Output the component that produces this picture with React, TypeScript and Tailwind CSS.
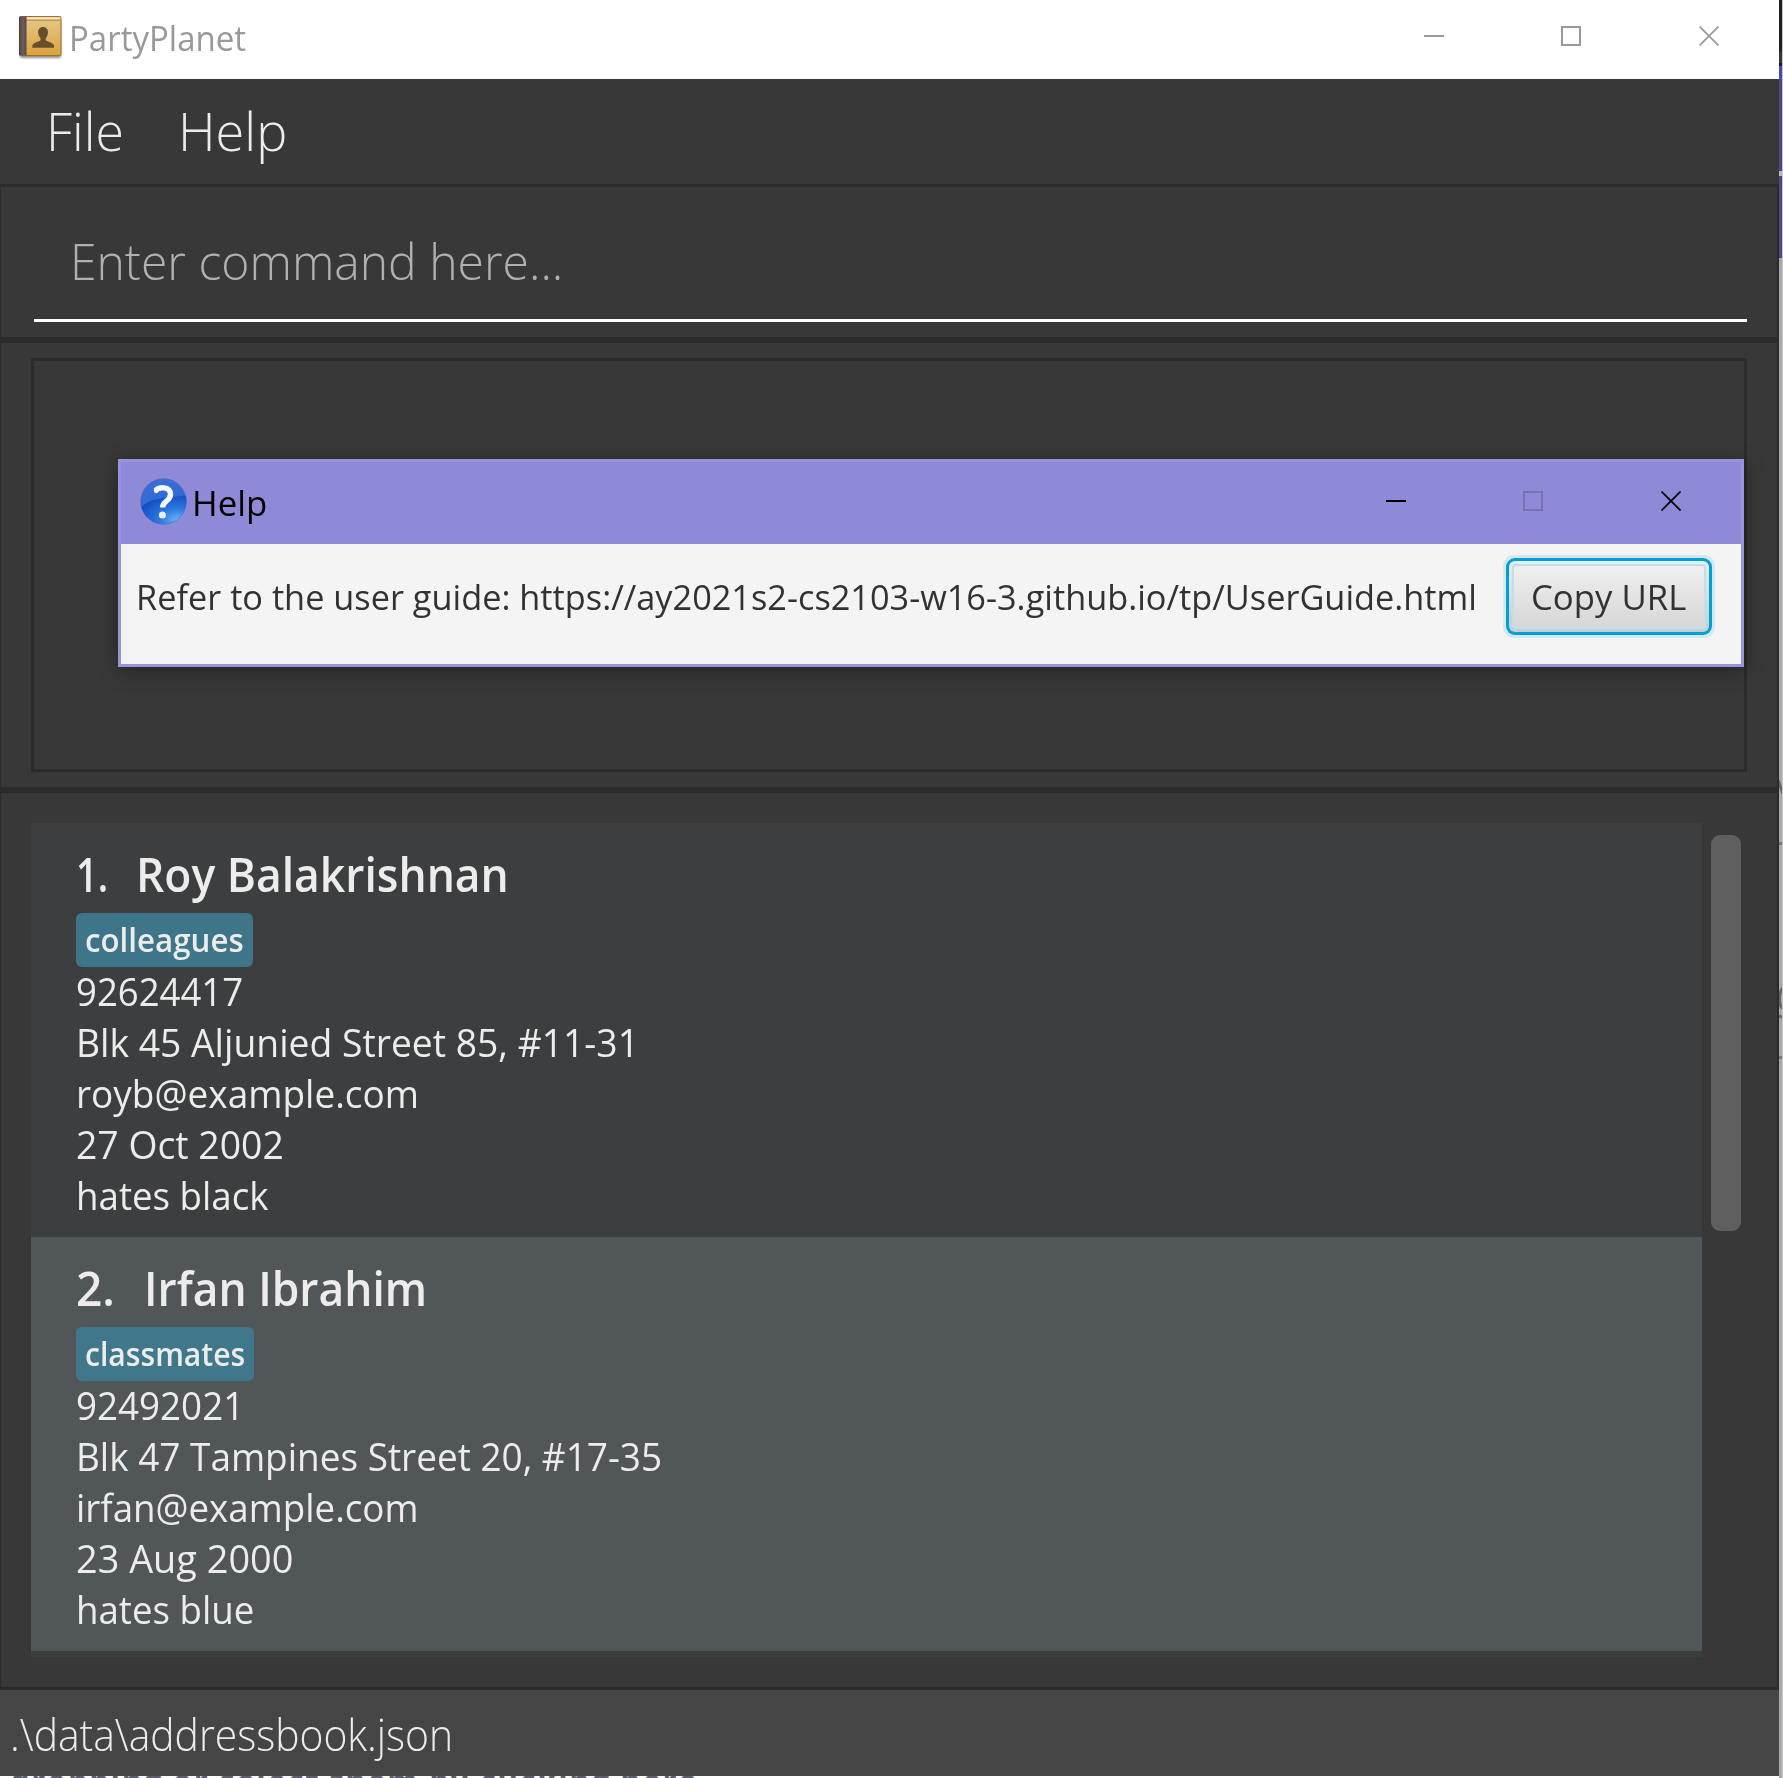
type Line = { text: string; fit: string };
type Person = {
  index: Line;
  name: Line;
  tag: Line;
  tagBox: string;
  details: Line[];
  background: string;
};

const people: Person[] = [
  {
    index: { text: '1.', fit: 'ml-[0.5px] scale-x-[0.8]' },
    name: { text: 'Roy Balakrishnan', fit: 'ml-[61.2px] scale-x-[0.9345]' },
    tag: { text: 'colleagues', fit: 'scale-x-[0.9620]' },
    tagBox: 'w-[177px] bg-[#3e7589]',
    background: 'bg-[#3c3e3f]',
    details: [
      { text: '92624417', fit: 'ml-[1.2px] scale-x-[0.9489]' },
      { text: 'Blk 45 Aljunied Street 85, #11-31', fit: 'ml-[0.8px] scale-x-[0.9680]' },
      { text: 'royb@example.com', fit: 'ml-[0.5px] scale-x-[0.9600]' },
      { text: '27 Oct 2002', fit: 'ml-[1.2px] scale-x-[0.9700]' },
      { text: 'hates black', fit: 'ml-[0.8px] scale-x-[0.9530]' },
    ],
  },
  {
    index: { text: '2.', fit: 'ml-px scale-x-[0.9700]' },
    name: { text: 'Irfan Ibrahim', fit: 'ml-[68.6px] scale-x-[0.9340]' },
    tag: { text: 'classmates', fit: 'scale-x-[0.9265]' },
    tagBox: 'w-[178px] bg-[#40778b]',
    background: 'bg-[#515658]',
    details: [
      { text: '92492021', fit: 'ml-[1.2px] scale-x-[0.9550]' },
      { text: 'Blk 47 Tampines Street 20, #17-35', fit: 'ml-[0.8px] scale-x-[0.9595]' },
      { text: 'irfan@example.com', fit: 'ml-[0.8px] scale-x-[0.9540]' },
      { text: '23 Aug 2000', fit: 'ml-[1.2px] scale-x-[0.9840]' },
      { text: 'hates blue', fit: 'ml-[0.8px] scale-x-[0.9520]' },
    ],
  },
];

function BookIcon() {
  return (
    <svg className="h-[50px] w-[46px]" viewBox="0 0 46 50">
      <defs>
        <linearGradient id="cover" x1="0" y1="0" x2="0" y2="1">
          <stop offset="0" stopColor="#e6c789" />
          <stop offset="0.5" stopColor="#e0b668" />
          <stop offset="1" stopColor="#dba23c" />
        </linearGradient>
        <linearGradient id="spine" x1="0" y1="0" x2="1" y2="0">
          <stop offset="0" stopColor="#4c3f3e" />
          <stop offset="0.5" stopColor="#6e5f5c" />
          <stop offset="1" stopColor="#574746" />
        </linearGradient>
        <filter id="bookShadow" x="-20%" y="-20%" width="140%" height="140%">
          <feGaussianBlur stdDeviation="1.2" />
        </filter>
      </defs>
      <rect x="2" y="4" width="41" height="39" rx="2" fill="#000" opacity="0.45" filter="url(#bookShadow)" />
      <rect x="1" y="1" width="42.500" height="40" rx="2" fill="#9c6f2a" />
      <rect x="8" y="2" width="34.500" height="38" rx="1" fill="url(#cover)" />
      <path d="M4 3.300H42" stroke="#f7ecd2" strokeWidth="1.600" />
      <path d="M8 5.300H42" stroke="#b98a3d" strokeWidth="1" />
      <path d="M2.500 1.500H8.500V40.500H2.500Q1 40.500 1 39V3Q1 1.500 2.500 1.500Z" fill="url(#spine)" />
      <path
        d="M25 12c3.200 0 5.200 2.300 5 5.500-.2 2.500-1 4.300-2.200 5.500v2.200c1 1.700 7.800 2 8.200 5.600v2H14.300v-2c.4-3.600 7.200-3.900 8.200-5.600V23c-1.300-1.200-2.200-3-2.400-5.500C20 14.300 21.800 12 25 12Z"
        fill="#66502c"
      />
    </svg>
  );
}

function HelpIcon() {
  return (
    <svg className="h-[47px] w-[47px]" viewBox="0 0 47 47">
      <defs>
        <linearGradient id="ball" x1="0" y1="0" x2="0.3" y2="1">
          <stop offset="0" stopColor="#3a6fd6" />
          <stop offset="1" stopColor="#2a66d6" />
        </linearGradient>
        <radialGradient id="glow" cx="0.8" cy="0.85" r="0.85">
          <stop offset="0" stopColor="#5fb4f8" />
          <stop offset="0.45" stopColor="#2f7ae0" />
          <stop offset="1" stopColor="#1450c8" />
        </radialGradient>
      </defs>
      <circle cx="23.500" cy="23.500" r="22.700" fill="url(#ball)" stroke="#5b69b4" strokeWidth="1" />
      <path d="M1.500 29C9 20 26 20 45.700 17.500A22.500 22.500 0 0 1 1.500 29Z" fill="url(#glow)" />
      <path
        d="M15.500 12.500C19 8.500 30.500 8 30.500 16.500c0 6.500-8 6.500-8 13"
        fill="none"
        stroke="#f4f6fc"
        strokeWidth="5.400"
        strokeLinejoin="round"
      />
      <circle cx="16.200" cy="12.800" r="2.400" fill="#f4f6fc" />
      <circle cx="22.400" cy="37" r="3.500" fill="#e9eefb" />
    </svg>
  );
}

function WindowControls({ maximize }: { maximize: string }) {
  return (
    <div className="flex items-center">
      <span className="h-[2px] w-5 bg-current" />
      <span className={`ml-[117px] size-5 border-2 ${maximize}`} />
      <svg className="ml-[118px] size-5" viewBox="0 0 20 20" fill="none" stroke="currentColor" strokeWidth="1.700">
        <path d="M0.500 0.500L19.500 19.500M19.500 0.500L0.500 19.500" />
      </svg>
    </div>
  );
}

function PersonCard({ person }: { person: Person }) {
  return (
    <div className={`h-[414px] pt-[21px] pl-[44px] ${person.background}`}>
      <div className="flex h-[60px] text-[47.5px] leading-[60px] font-semibold">
        <span className="w-0">
          <span className={`inline-block origin-left ${person.index.fit}`}>{person.index.text}</span>
        </span>
        <span className={`inline-block origin-left ${person.name.fit}`}>{person.name.text}</span>
      </div>
      <div className={`mt-[9px] ml-px h-[54px] rounded-[6px] pl-[9px] ${person.tagBox}`}>
        <span className={`inline-block origin-left text-[32.5px] leading-[54px] font-semibold ${person.tag.fit}`}>
          {person.tag.text}
        </span>
      </div>
      <div className="-mt-px flex flex-col items-start text-[38.5px] leading-[51px]">
        {person.details.map((line) => (
          <span key={line.text} className={`origin-left ${line.fit}`}>
            {line.text}
          </span>
        ))}
      </div>
    </div>
  );
}

function HelpDialog() {
  return (
    <div className="absolute top-[459px] left-[118px] flex h-[208px] w-[1626px] flex-col border-[3px] border-[#9893dc] bg-[#f4f4f4] shadow-[0_4px_18px_rgba(0,0,0,0.36)]">
      <div className="flex h-[82px] shrink-0 items-start justify-between bg-[#8f8ad7] pr-[60px] pl-[19px] text-black">
        <div className="flex">
          <div className="mt-[16px]">
            <HelpIcon />
          </div>
          <span className="ml-[4.8px] origin-left scale-x-[0.98] text-[35.5px] leading-[80px]">Help</span>
        </div>
        <div className="mt-[29px]">
          <WindowControls maximize="border-[#7772b4]" />
        </div>
      </div>
      <div className="flex pt-[11px] pl-[15.2px] text-[35.5px] text-[#323232]">
        <span className="w-[1366.8px] origin-left scale-x-[0.9660] leading-[82px]">
          Refer to the user guide: https://ay2021s2-cs2103-w16-3.github.io/tp/UserGuide.html
        </span>
        <button className="h-[83px] w-[212px] shrink-0 rounded-[11px] bg-[#d3e9f0] p-[3px]">
          <span className="block h-full rounded-[9px] bg-[#039ed3] p-[3px]">
            <span className="block h-full rounded-[6px] bg-linear-to-b from-[#e0f0f5] to-[#bfd0d7] p-[3px]">
              <span className="flex h-full items-center rounded-[4px] border-2 border-[#c6dde5] bg-linear-to-b from-[#efefef] to-[#d7d7d7] pb-[2px] pl-[17px]">
                <span className="origin-left scale-x-[0.9780] leading-[60px] whitespace-nowrap">Copy URL</span>
              </span>
            </span>
          </span>
        </button>
      </div>
    </div>
  );
}

function DesktopEdge() {
  return (
    <div className="relative flex w-1 flex-col overflow-hidden border-r border-[#c8c8c8] bg-[#a9a9a9]">
      <div className="-mr-px h-[51px] shrink-0 bg-[#1f1f1f]" />
      <div className="-mr-px h-[12px] shrink-0 bg-[#363636]" />
      <div className="-mr-px h-[3px] shrink-0 bg-[#1a1a1a]" />
      <div className="-mr-px h-[13px] shrink-0 bg-[#3f4cae]" />
      <div className="-mr-px h-[92px] shrink-0 bg-[#464d86]" />
      <div className="-mr-px h-[5px] shrink-0 bg-[#bdb8b8]" />
      <div className="-mr-px h-[82px] shrink-0 bg-[#464d86]" />
      <div className="mt-[584px] -mr-px h-[3px] shrink-0 bg-[#777777]" />
      <div className="mt-[211px] -mr-px h-[3px] shrink-0 bg-[#777777]" />
      <svg className="absolute top-[778px] left-0 h-[242px] w-1" viewBox="0 0 4 242" fill="none" stroke="#66676c" strokeWidth="3">
        <path d="M-1 2L5 18" />
        <path d="M5 209Q0 213 0.500 222Q1 230 5 231M0 238L5 240" />
      </svg>
    </div>
  );
}

export default function App() {
  return (
    <div className="relative flex h-[1778px] w-[1783px] overflow-hidden bg-white font-['Open_Sans',sans-serif] whitespace-pre">
      <div className="flex w-[1779px] flex-col bg-[#383838] text-[#ececec]">
        <header className="flex h-[79px] shrink-0 justify-between bg-white pr-[60px] pl-[18px] text-[#999999]">
          <div className="flex">
            <div className="mt-[15px]">
              <BookIcon />
            </div>
            <span className="ml-[5.2px] origin-left scale-x-[0.9300] text-[35.5px] leading-[74px]">PartyPlanet</span>
          </div>
          <div className="mt-[26px]">
            <WindowControls maximize="border-current" />
          </div>
        </header>

        <nav className="flex h-[105px] shrink-0 text-[54px] leading-[102px] font-light">
          <span className="ml-[46.2px] w-[132.1px] origin-left scale-x-[0.9600]">File</span>
          <span className="origin-left scale-x-[0.9680]">Help</span>
        </nav>

        <div className="h-[156px] shrink-0 border-t-3 border-r-2 border-b-3 border-l border-[#2b2b2b] pt-[15px] pr-[30px] pl-[33px]">
          <div className="h-[120px] border-b-3 border-white pl-[36px] text-[50.5px] leading-[117px] font-light text-[#b0b0b0]">
            <span className="inline-block origin-left scale-x-[0.9510]">Enter command here...</span>
          </div>
        </div>

        <div className="h-[450px] shrink-0 border-t-3 border-r-2 border-b-3 border-l border-[#2b2b2b] pt-[15px] pr-[30px] pl-[30px]">
          <div className="h-[414px] border-3 border-[#2b2b2b]" />
        </div>

        <main className="flex h-[900px] shrink-0 border-t-3 border-r-2 border-b-3 border-l border-[#2b2b2b] pt-[30px] pl-[30px]">
          <div className="h-[834px] w-[1671px] bg-[#3c3d3f]">
            {people.map((person) => (
              <PersonCard key={person.name.text} person={person} />
            ))}
          </div>
          <div className="mt-[12px] ml-[9px] h-[396px] w-[30px] rounded-[9px] bg-[#5f5f5f]" />
        </main>

        <footer className="h-[86px] shrink-0 bg-[#454545] pl-[9.8px] text-[43.5px] leading-[90px] font-light">
          <span className="inline-block origin-left scale-x-[0.9380]">.\data\addressbook.json</span>
        </footer>
        <div className="h-[2px] shrink-0 overflow-hidden bg-white pl-[10px] text-[31px] leading-[30px] font-bold tracking-[1.7px] text-[#5b5f70]">
          <span className="-mt-[11px] block">dropping or select them by clicking here</span>
        </div>
      </div>
      <DesktopEdge />
      <HelpDialog />
    </div>
  );
}
